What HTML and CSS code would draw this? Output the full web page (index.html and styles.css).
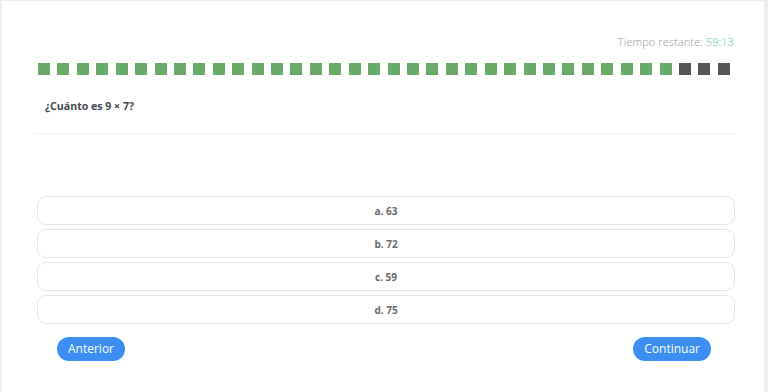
FILE: index.html
```html
<!DOCTYPE html>
<html lang="es">
<head>
<meta charset="utf-8">
<link rel="stylesheet" href="styles.css">
</head>
<body>
<div class="card">
  <div class="timer">Tiempo restante: <span class="time">59:13</span></div>
  <div class="progress" id="progress"></div>
  <div class="question">¿Cuánto es 9 × 7?</div>
  <div class="divider"></div>
  <div class="options">
    <div class="option">a. 63</div>
    <div class="option">b. 72</div>
    <div class="option">c. 59</div>
    <div class="option">d. 75</div>
  </div>
  <div class="nav">
    <button class="btn">Anterior</button>
    <button class="btn">Continuar</button>
  </div>
</div>
<script>
  var p = document.getElementById('progress');
  for (var i = 0; i < 36; i++) {
    var s = document.createElement('span');
    s.className = i < 33 ? 'sq done' : 'sq';
    p.appendChild(s);
  }
</script>
</body>
</html>
```
FILE: styles.css
```css
html, body {
  margin: 0;
  padding: 0;
  height: 100%;
}
body {
  background: #eeeeee;
  font-family: "Open Sans", "DejaVu Sans", sans-serif;
}
.card {
  background: #ffffff;
  margin: 1px 4px 0 2px;
  height: calc(100% - 1px);
  padding: 0 29px 0 33px;
  box-sizing: border-box;
}
.timer {
  padding-top: 33px;
  height: 15px;
  line-height: 15px;
  text-align: right;
  font-size: 11.2px;
  font-weight: 300;
  color: #999999;
  padding-right: 1px;
}
.time {
  color: #5cc9b3;
}
.progress {
  display: flex;
  justify-content: space-between;
  margin: 14px 5px 0 3px;
  height: 12px;
}
.sq {
  width: 12px;
  height: 12px;
  background: #555555;
  display: block;
}
.sq.done {
  background: #6aaa6a;
}
.question {
  margin-top: 24px;
  padding-left: 10px;
  font-size: 10.6px;
  font-weight: 700;
  color: #444a50;
  line-height: 14px;
}
.divider {
  margin-top: 20px;
  height: 1px;
  background: #efefef;
}
.options {
  margin-top: 62px;
  margin-left: 2px;
  display: flex;
  flex-direction: column;
  gap: 4px;
}
.option {
  height: 27px;
  border: 1px solid #e6e6e6;
  border-radius: 9px;
  display: flex;
  align-items: center;
  justify-content: center;
  font-size: 10px;
  font-weight: 700;
  color: #666a6e;
}
.nav {
  display: flex;
  justify-content: space-between;
  margin-top: 13px;
  padding: 0 24px 0 22px;
}
.btn {
  height: 24px;
  border: none;
  border-radius: 12px;
  background: #3d8ef2;
  color: #ffffff;
  font-family: "Open Sans", "DejaVu Sans", sans-serif;
  font-size: 12px;
  padding: 0 11px;
  line-height: 24px;
}
```
